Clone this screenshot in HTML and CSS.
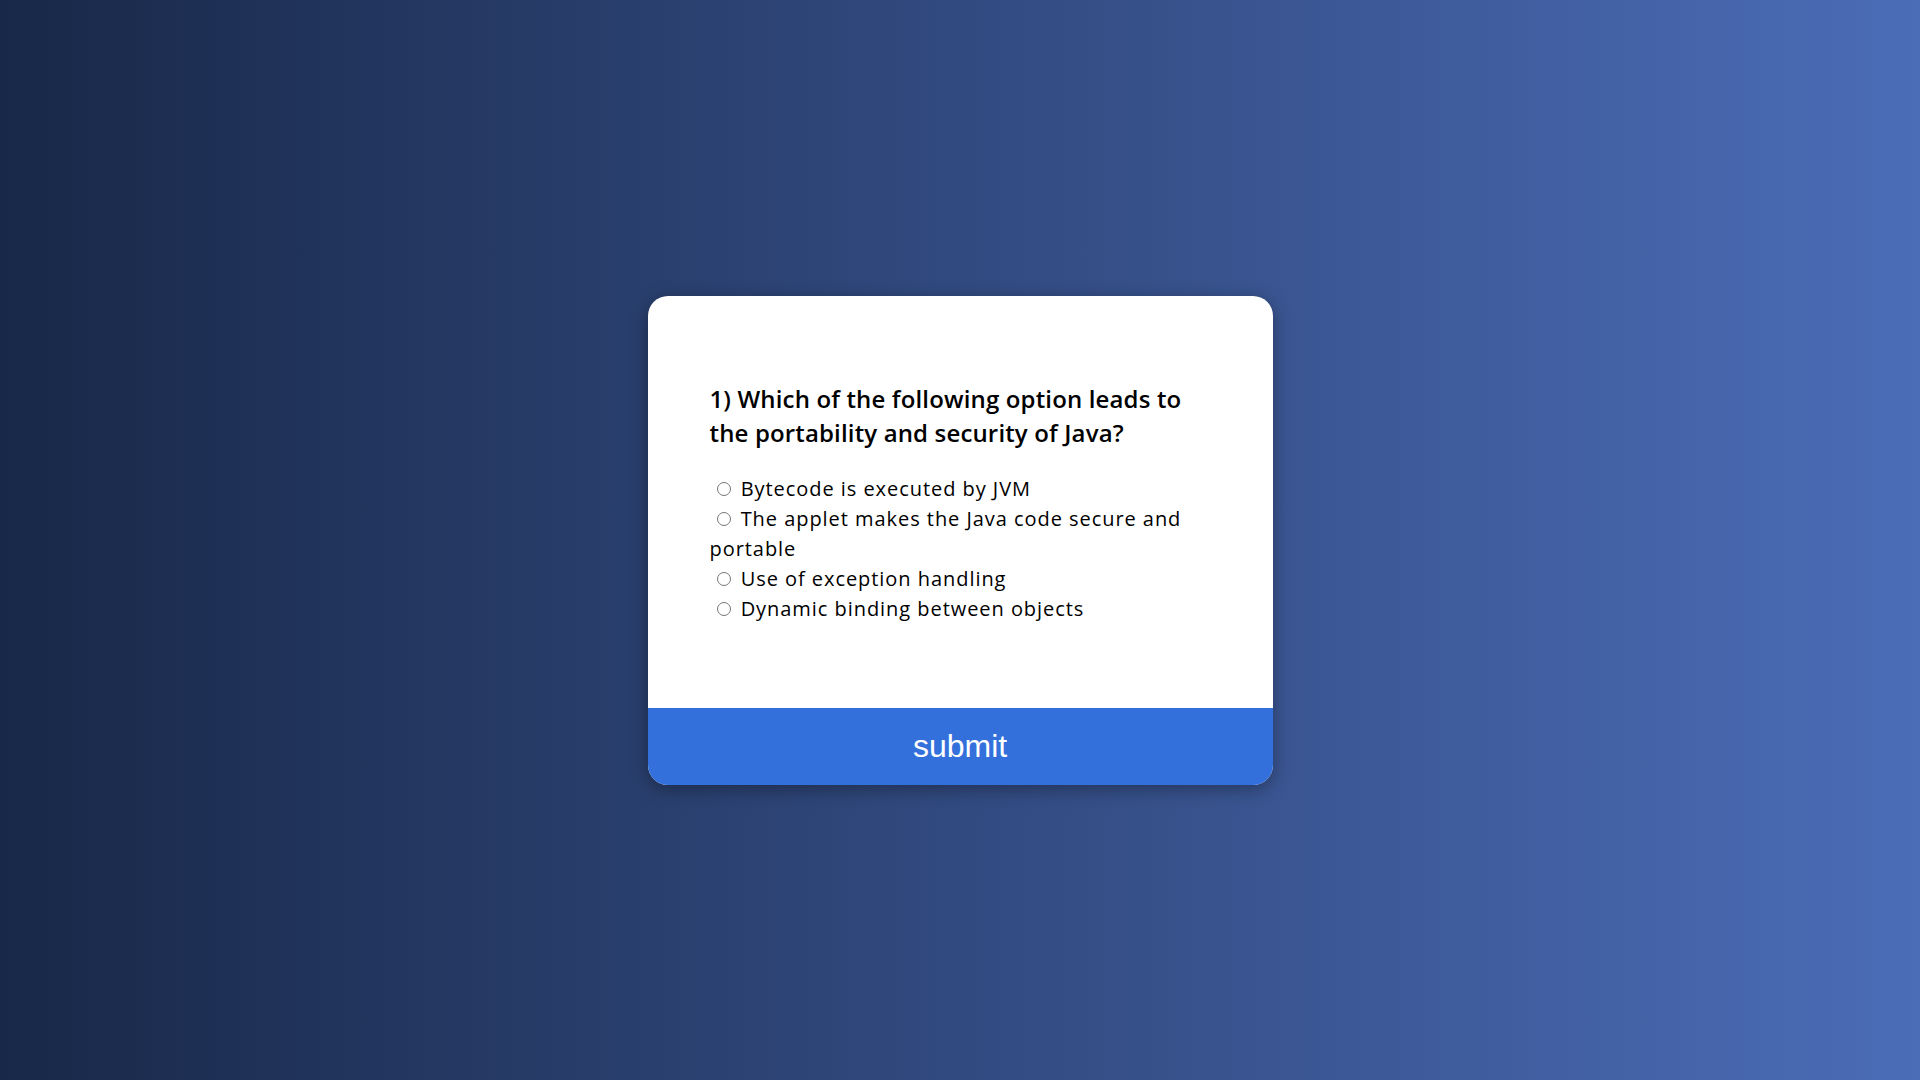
FILE: index.html
```html
<!DOCTYPE html>
<html lang="en">
<head>
<meta charset="UTF-8">
<title>Quiz</title>
<link rel="stylesheet" href="styles.css">
</head>
<body>
  <div class="quiz-card">
    <div class="quiz-body">
      <h2 class="question">1) Which of the following option leads to the portability and security of Java?</h2>
      <div class="options">
        <input class="radio" type="radio" id="a" name="answer"> <label for="a">Bytecode is executed by JVM</label><br>
        <input class="radio" type="radio" id="b" name="answer"> <label for="b">The applet makes the Java code secure and portable</label><br>
        <input class="radio" type="radio" id="c" name="answer"> <label for="c">Use of exception handling</label><br>
        <input class="radio" type="radio" id="d" name="answer"> <label for="d">Dynamic binding between objects</label>
      </div>
    </div>
    <button class="submit-btn" type="button">submit</button>
  </div>
</body>
</html>
```
FILE: styles.css
```css
* {
  box-sizing: border-box;
}

html, body {
  height: 100%;
}

body {
  margin: 0;
  background: linear-gradient(to right, #182848, #4b6cb7);
  font-family: "Open Sans", "Noto Sans", sans-serif;
  display: flex;
  align-items: center;
  justify-content: center;
  overflow: hidden;
}

.quiz-card {
  width: 625px;
  background: #ffffff;
  border-radius: 20px;
  overflow: hidden;
  box-shadow: 0 4px 18px rgba(0, 0, 0, 0.35);
}

.quiz-body {
  padding: 86px 62px 84px;
}

.question {
  margin: 0 0 24px;
  font-size: 24px;
  line-height: 34px;
  font-weight: 600;
  letter-spacing: 0.15px;
  color: #000000;
}

.options {
  font-size: 20px;
  line-height: 30px;
  letter-spacing: 0.95px;
  color: #000000;
}

.radio {
  width: 14px;
  height: 14px;
  margin: 3px 4px 0 7px;
}

.submit-btn {
  display: block;
  width: 100%;
  border: none;
  background: #3470db;
  color: #ffffff;
  font-family: "Liberation Sans", Arial, sans-serif;
  font-size: 32px;
  line-height: 37px;
  padding: 20px 0;
  cursor: pointer;
}
```
